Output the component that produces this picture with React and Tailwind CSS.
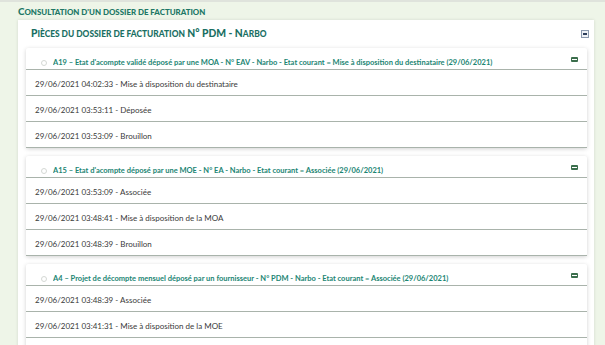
const pieces = [
  {
    titre:
      "A19 – Etat d'acompte validé déposé par une MOA - N° EAV - Narbo - Etat courant = Mise à disposition du destinataire (29/06/2021)",
    lignes: [
      "29/06/2021 04:02:33 - Mise à disposition du destinataire",
      "29/06/2021 03:53:11 - Déposée",
      "29/06/2021 03:53:09 - Brouillon",
    ],
  },
  {
    titre:
      "A15 – Etat d'acompte déposé par une MOE - N° EA - Narbo - Etat courant = Associée (29/06/2021)",
    lignes: [
      "29/06/2021 03:53:09 - Associée",
      "29/06/2021 03:48:41 - Mise à disposition de la MOA",
      "29/06/2021 03:48:39 - Brouillon",
    ],
  },
  {
    titre:
      "A4 – Projet de décompte mensuel déposé par un fournisseur - N° PDM - Narbo - Etat courant = Associée (29/06/2021)",
    lignes: [
      "29/06/2021 03:48:39 - Associée",
      "29/06/2021 03:41:31 - Mise à disposition de la MOE",
      "29/06/2021 03:41:30 - Brouillon",
    ],
  },
];

function Piece({ piece }) {
  return (
    <div className="mb-[8px] rounded-[2px] bg-white shadow-[0_1px_4px_rgba(0,0,0,0.18)]">
      {/* En-tête de la pièce */}
      <div className="flex h-[22px] items-center border-b border-[#a9b3ab] pl-[15px] pr-[9px] pt-[9px]">
        <span className="h-[6px] w-[6px] shrink-0 rounded-full border border-[#d4d8d4] bg-white" />
        <span className="ml-[6px] flex-1 truncate text-[7.5px] font-bold text-[#1b8573]">
          {piece.titre}
        </span>
        <span className="-mt-[7px] flex h-[5px] w-[7px] shrink-0 items-center justify-center rounded-[1px] bg-[#3b6e4c]">
          <span className="h-[1px] w-[5px] bg-white" />
        </span>
      </div>
      {/* Historique */}
      {piece.lignes.map((l, i) => (
        <div
          key={i}
          className="flex h-[26px] items-center border-b border-[#a9b3ab] pl-[9px] pt-[3px] text-[8px] text-[#3a3a3a]"
        >
          {l}
        </div>
      ))}
    </div>
  );
}

export default function App() {
  return (
    <div
      className="h-[345px] w-[605px] overflow-hidden border-t-2 border-[#dfe3dc] bg-[#eef5e8]"
      style={{ fontFamily: "Lato, 'Noto Sans', sans-serif" }}
    >
      <div className="flex h-[18px] items-center pl-[18px] text-[9.8px] font-black uppercase text-[#207765]">
        <span>
          C<span className="text-[7.9px]">onsultation d'un dossier de facturation</span>
        </span>
      </div>

      <div className="ml-[18px] w-[576px] bg-white pb-[1px] shadow-[0_0_3px_rgba(0,0,0,0.12)]">
        <div className="flex h-[28px] items-center pl-[13px] pr-[5px] font-black text-[#1a6f63]">
          <span className="flex-1 text-[10.3px]">
            P<span className="text-[8.4px] uppercase">ièces du dossier de facturation</span> N° PDM - N
            <span className="text-[8.4px] uppercase">arbo</span>
          </span>
          <span className="flex h-[8px] w-[8px] items-center justify-center border border-[#8a98ad] bg-[#eef1f5]">
            <span className="h-[1.5px] w-[4px] bg-[#2d3e5a]" />
          </span>
        </div>

        <div className="px-[8px] pr-[7px]">
          {pieces.map((p, i) => (
            <Piece key={i} piece={p} />
          ))}
        </div>
      </div>
    </div>
  );
}
